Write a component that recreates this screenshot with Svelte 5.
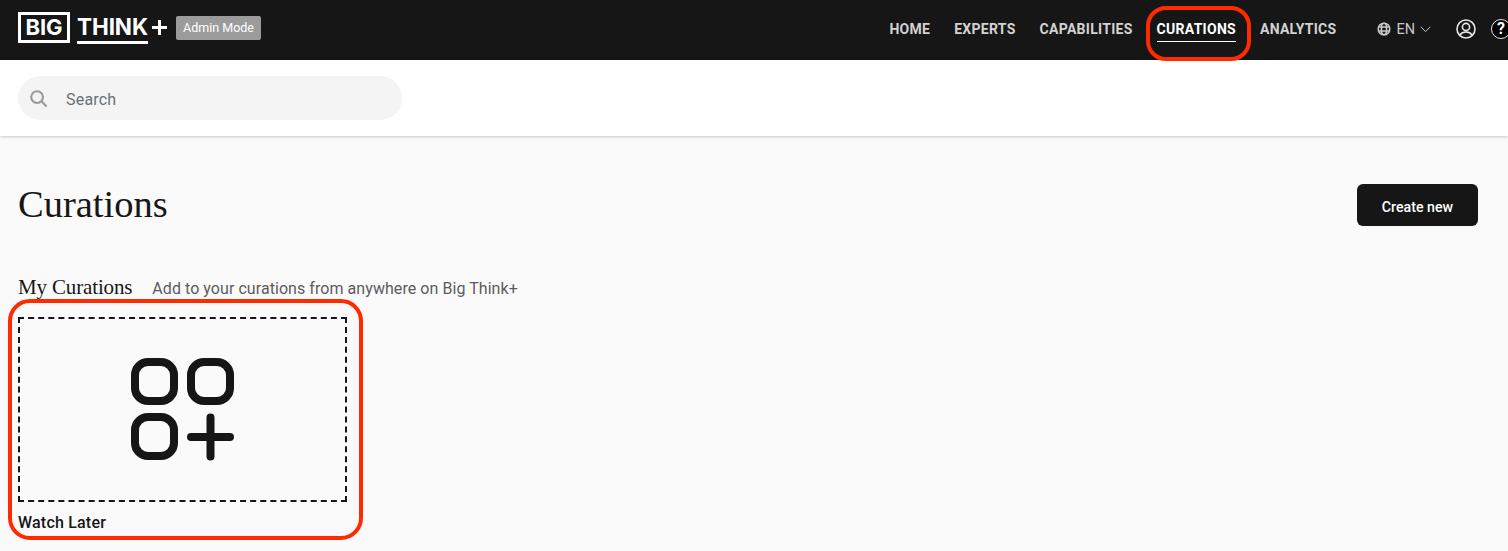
<script>
	const links = ['HOME', 'EXPERTS', 'CAPABILITIES', 'CURATIONS', 'ANALYTICS'];
</script>

<div class="page">
	<header class="topbar">
		<div class="brand">
			<span class="logo-big">BIG</span>
			<span class="logo-think">THINK</span>
			<svg class="logo-plus" width="15" height="15" viewBox="0 0 15 15"><path d="M0 7.500h15M7.500 0v15" stroke="#fff" stroke-width="3" /></svg>
			<span class="admin">Admin Mode</span>
		</div>

		<nav class="nav">
			{#each links as link}
				<a href="#top" class="nav-link" class:active={link === 'CURATIONS'}>{link}</a>
			{/each}
		</nav>

		<div class="lang">
			<svg width="14" height="14" viewBox="0 0 14 14" fill="none" stroke="#c8c8c8" stroke-width="1.600">
				<circle cx="7" cy="7" r="5.800" />
				<ellipse cx="7" cy="7" rx="2.600" ry="5.800" />
				<path d="M1.400 5h11.200M1.400 9h11.200" />
			</svg>
			<span>EN</span>
			<svg width="11" height="7" viewBox="0 0 11 7" fill="none" stroke="#c8c8c8" stroke-width="1"><path d="M.7.8l4.800 4.800L10.300.8" /></svg>
		</div>

		<svg class="user" width="20" height="20" viewBox="0 0 20 20" fill="none" stroke="#e6e6e6" stroke-width="1.600">
			<circle cx="10" cy="10" r="9" />
			<circle cx="10" cy="8" r="3.600" />
			<path d="M3.800 16c1.500-2.300 3.500-3 6.200-3s4.700.7 6.200 3" />
		</svg>
		<span class="help">?</span>
	</header>

	<div class="searchbar">
		<div class="search">
			<svg width="19" height="19" viewBox="0 0 20 20" fill="none" stroke="#9a9a9a" stroke-width="2.200"><circle cx="8.500" cy="8.500" r="6.200" /><path d="M13 13l5.500 5.500" /></svg>
			<span>Search</span>
		</div>
	</div>

	<main class="content">
		<div class="title-row">
			<h1>Curations</h1>
			<button type="button" class="create">Create new</button>
		</div>

		<div class="section-head">
			<h2>My Curations</h2>
			<p>Add to your curations from anywhere on Big Think+</p>
		</div>

		<div class="card">
			<div class="thumb">
				<svg width="104" height="104" viewBox="0 0 104 104" fill="none" stroke="#161616" stroke-width="8" stroke-linecap="round">
					<rect x="4" y="4" width="39" height="39" rx="13" />
					<rect x="60" y="4" width="39" height="39" rx="13" />
					<rect x="4" y="59" width="39" height="39" rx="13" />
					<path d="M60 79h39M79.500 59.500v39" />
				</svg>
			</div>
			<div class="card-title">Watch Later</div>
		</div>
	</main>

	<div class="mark mark-nav"></div>
	<div class="mark mark-card"></div>
</div>

<style>
	:global(body) {
		margin: 0;
		background: #fafafa;
	}

	.page {
		position: relative;
		height: 551px;
		overflow: hidden;
		background: #fafafa;
		font-family: Roboto, "Liberation Sans", sans-serif;
		color: #161616;
	}

	.topbar {
		height: 60px;
		background: #161616;
		display: flex;
		align-items: center;
		padding-left: 18px;
		box-sizing: border-box;
	}

	.brand {
		display: flex;
		align-items: center;
	}

	.logo-big {
		box-sizing: border-box;
		width: 52px;
		height: 31px;
		margin-top: -5px;
		border: 3px solid #fff;
		color: #fff;
		font: 700 22px/25px "Inter", sans-serif;
		text-align: center;
	}

	.logo-think {
		margin-left: 7px;
		margin-top: -4px;
		width: 71px;
		height: 32px;
		box-sizing: border-box;
		border-bottom: 3px solid #fff;
		color: #fff;
		font: 700 22.500px/30px "Inter", sans-serif;
		letter-spacing: -0.1px;
		white-space: nowrap;
	}

	.logo-plus {
		margin-left: 4px;
		margin-top: -5px;
	}

	.admin {
		margin-left: 9px;
		width: 85px;
		height: 24px;
		margin-top: -4px;
		background: #9b9b9b;
		border-radius: 2px;
		color: #fff;
		font-size: 12.500px;
		line-height: 23px;
		text-align: center;
	}

	.nav {
		margin-left: auto;
		display: flex;
		gap: 24px;
		height: 60px;
		align-items: center;
	}

	.nav-link {
		color: #d2d2d2;
		font: 700 14px/18px Roboto, sans-serif;
		letter-spacing: 0.28px;
		text-decoration: none;
		padding: 3px 0 3px;
		border-bottom: 1px solid transparent;
		margin-top: -2px;
	}

	.nav-link.active {
		color: #fff;
		border-bottom-color: #fff;
	}

	.lang {
		margin-left: 41px;
		display: flex;
		align-items: center;
		gap: 5px;
		color: #c8c8c8;
		font-size: 14.500px;
		margin-top: -2px;
	}

	.user {
		margin-left: 25px;
		margin-top: -3px;
	}

	.help {
		flex: none;
		box-sizing: border-box;
		width: 20px;
		height: 20px;
		margin-left: 15px;
		margin-right: -3px;
		margin-top: -3px;
		border: 1.500px solid #e6e6e6;
		border-radius: 50%;
		background: #000;
		color: #fff;
		font: 700 16px/17px Roboto, sans-serif;
		text-align: center;
	}

	.searchbar {
		height: 76px;
		box-sizing: border-box;
		padding: 16px 18px 0;
		background: #fff;
		box-shadow: 0 1px 3px rgba(0, 0, 0, 0.2);
		position: relative;
	}

	.search {
		width: 384px;
		height: 44px;
		box-sizing: border-box;
		padding-left: 11px;
		display: flex;
		align-items: center;
		gap: 18px;
		background: #f4f4f4;
		border-radius: 22px;
		color: #697077;
		font-size: 16px;
	}

	.search span {
		padding-top: 2px;
		letter-spacing: 0.2px;
	}

	.content {
		padding: 0 30px 0 18px;
	}

	.title-row {
		display: flex;
		justify-content: space-between;
		align-items: center;
		height: 42px;
		margin-top: 48px;
	}

	h1 {
		margin: -2px 0 0;
		font: 400 38.500px/42px "Liberation Serif", serif;
		color: #161616;
	}

	.create {
		width: 121px;
		height: 42px;
		border: 0;
		border-radius: 6px;
		background: #161616;
		color: #fff;
		font: 500 14.200px/46px Roboto, sans-serif;
		padding: 0;
	}

	.section-head {
		display: flex;
		align-items: baseline;
		gap: 20px;
		margin-top: 49px;
		height: 24px;
	}

	h2 {
		margin: 0;
		font: 400 21px/24px "Liberation Serif", serif;
		letter-spacing: -0.15px;
		color: #161616;
	}

	.section-head p {
		margin: 0;
		font-size: 16px;
		letter-spacing: 0.06px;
		line-height: 24px;
		color: #5c5c5c;
	}

	.card {
		width: 329px;
		margin-top: 18px;
	}

	.thumb {
		box-sizing: border-box;
		height: 185px;
		border: 2px dashed #161616;
		display: flex;
		align-items: center;
		justify-content: center;
	}

	.card-title {
		margin-top: 11px;
		font-weight: 500;
		font-size: 16px;
		letter-spacing: 0.2px;
		line-height: 20px;
		color: #161616;
	}

	.mark {
		position: absolute;
		box-sizing: border-box;
		border: 4px solid #ff2a00;
		pointer-events: none;
	}

	.mark-nav {
		left: 1146px;
		top: 6px;
		width: 105px;
		height: 55px;
		border-radius: 20px;
	}

	.mark-card {
		left: 8px;
		top: 299px;
		width: 355px;
		height: 241px;
		border-radius: 22px;
	}
</style>
